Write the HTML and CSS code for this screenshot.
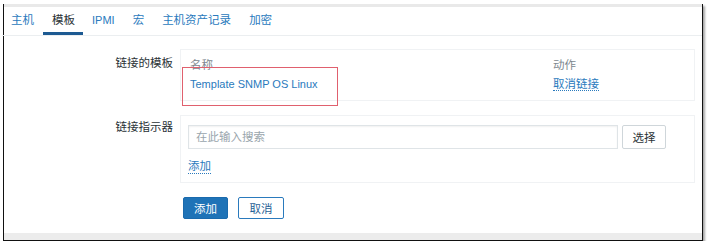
FILE: index.html
```html
<!DOCTYPE html>
<html lang="zh-CN">

<head>
    <meta charset="UTF-8">
    <title>模板</title>
    <link rel="stylesheet" href="styles.css">
</head>

<body>
    <div class="frame">
        <div class="top-strip"></div>

        <ul class="tabs">
            <li class="tab">主机</li>
            <li class="tab active">模板</li>
            <li class="tab latin">IPMI</li>
            <li class="tab">宏</li>
            <li class="tab">主机资产记录</li>
            <li class="tab">加密</li>
        </ul>

        <div class="form">
            <div class="form-row">
                <div class="form-label first">链接的模板</div>
                <div class="form-box linked">
                    <table class="list">
                        <tr>
                            <th class="col-name">名称</th>
                            <th>动作</th>
                        </tr>
                        <tr>
                            <td><a class="link latin">Template SNMP OS Linux</a></td>
                            <td><a class="link dotted">取消链接</a></td>
                        </tr>
                    </table>
                    <!-- 标注框 -->
                    <div class="mark"></div>
                </div>
            </div>

            <div class="form-row">
                <div class="form-label">链接指示器</div>
                <div class="form-box search">
                    <div class="search-line">
                        <input type="text" class="search-input" placeholder="在此输入搜索">
                        <button class="btn-alt">选择</button>
                    </div>
                    <a class="link dotted add-link">添加</a>
                </div>
            </div>

            <div class="buttons">
                <button class="btn-primary">添加</button>
                <button class="btn-cancel">取消</button>
            </div>
        </div>

        <div class="bottom-strip"></div>
    </div>
</body>

</html>
```

FILE: styles.css
```css
body {
    margin: 0;
    background-color: #fff;
    font-family: 'Liberation Sans', Arial, 'Noto Sans CJK SC', sans-serif;
    font-size: 11.5px;
    color: #2a3236;
}

.latin {
    font-size: 11px;
}

.frame {
    position: relative;
    margin: 4px 0 0 3px;
    width: 698px;
    height: 236px;
    border: 1px solid #111;
    border-top: none;
    box-shadow: 2px 2px 2px rgba(0, 0, 0, 0.35);
    display: flex;
    flex-direction: column;
    background-color: #fff;
}

.top-strip {
    height: 3px;
    background-color: #e9e9e9;
}

.tabs {
    list-style: none;
    margin: 0 0 0 -2px;
    padding: 0;
    display: flex;
    border-bottom: 1px solid #ebeef0;
}

.tab {
    padding: 6px 9px 5px;
    line-height: 14px;
    color: #2a7abd;
    border-bottom: 3px solid transparent;
}

.tab.active {
    color: #2a3236;
    padding-right: 8px;
    border-bottom-color: #1d5a92;
}

.form {
    flex: 1;
    padding-top: 13px;
}

.form-row {
    display: flex;
    margin-bottom: 14px;
}

.form-label {
    width: 169px;
    padding-right: 7px;
    text-align: right;
    line-height: 14px;
    padding-top: 5px;
}

.form-label.first {
    padding-top: 7px;
}

.form-box {
    position: relative;
    width: 513px;
    border: 1px solid #f0f2f4;
}

.linked {
    padding: 8px 0 9px 9px;
    width: 504px;
}

.list {
    border-collapse: collapse;
}

.list th,
.list td {
    padding: 0;
    text-align: left;
    font-weight: normal;
    line-height: 14px;
}

.list th {
    color: #7d878e;
    padding-bottom: 5px;
}

.col-name {
    width: 363px;
}

.link {
    color: #2a7abd;
    text-decoration: none;
}

.dotted {
    border-bottom: 1px dotted #2a7abd;
}

.mark {
    position: absolute;
    left: 1px;
    top: 17px;
    width: 154px;
    height: 37px;
    border: 1px solid #e0606e;
}

.search {
    padding: 9px 0 8px 7px;
    width: 506px;
}

.search-line {
    display: flex;
    gap: 4px;
}

.search-input {
    width: 414px;
    height: 22px;
    margin: 0;
    padding: 0 7px;
    border: 1px solid #dfe4e7;
    box-shadow: inset 0 1px 2px rgba(0, 0, 0, 0.06);
    font-family: inherit;
    font-size: 11.5px;
    color: #2a3236;
}

.search-input::placeholder {
    color: #9aa6ad;
}

.btn-alt {
    width: 44px;
    height: 24px;
    padding: 0;
    border: 1px solid #cfd6da;
    border-radius: 2px;
    background-color: #fff;
    font-family: inherit;
    font-size: 11.5px;
    color: #2a3236;
}

.add-link {
    display: inline-block;
    margin-top: 11px;
    line-height: 13px;
}

.buttons {
    display: flex;
    gap: 10px;
    margin-left: 179px;
}

.btn-primary,
.btn-cancel {
    height: 22px;
    padding: 0;
    border-radius: 2px;
    font-family: inherit;
    font-size: 11.5px;
}

.btn-primary {
    width: 45px;
    border: 1px solid #1a6aad;
    background-color: #1f73b7;
    color: #fff;
}

.btn-cancel {
    width: 46px;
    border: 1px solid #2a7abd;
    background-color: #fff;
    color: #1f5f96;
}

.bottom-strip {
    height: 7px;
    background-color: #ececec;
}
```
